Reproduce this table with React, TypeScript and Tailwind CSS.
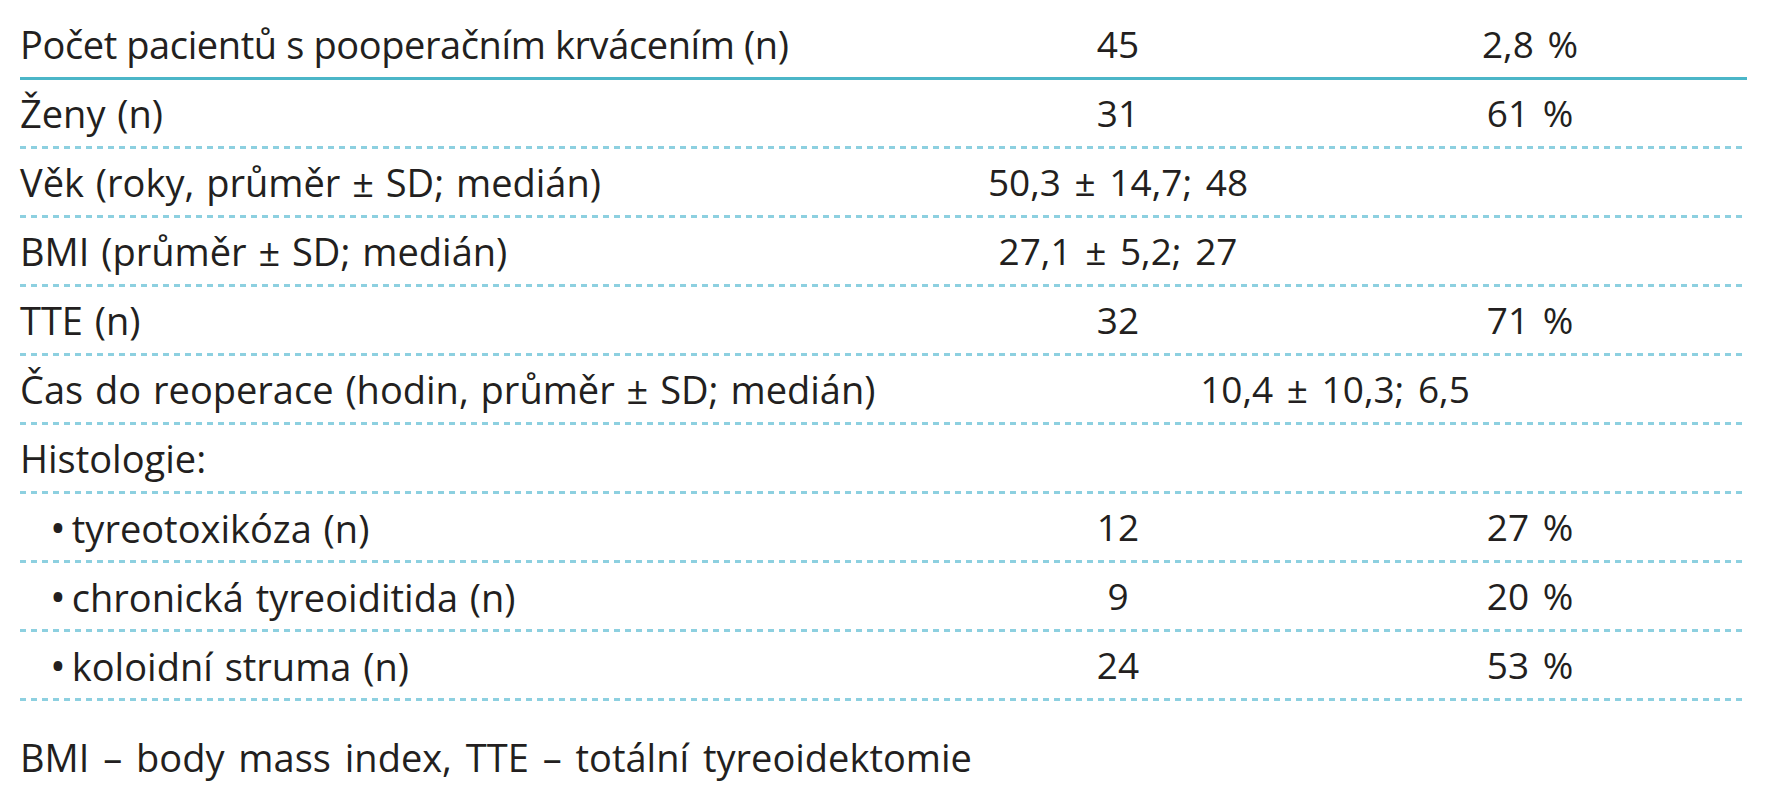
const rows: { label: string; a?: string; b?: string; span?: string; indent?: boolean }[] = [
  { label: "Ženy (n)", a: "31", b: "61 %" },
  { label: "Věk (roky, průměr ± SD; medián)", a: "50,3 ± 14,7; 48" },
  { label: "BMI (průměr ± SD; medián)", a: "27,1 ± 5,2; 27" },
  { label: "TTE (n)", a: "32", b: "71 %" },
  { label: "Čas do reoperace (hodin, průměr ± SD; medián)", span: "10,4 ± 10,3; 6,5" },
  { label: "Histologie:" },
  { label: "tyreotoxikóza (n)", a: "12", b: "27 %", indent: true },
  { label: "chronická tyreoiditida (n)", a: "9", b: "20 %", indent: true },
  { label: "koloidní struma (n)", a: "24", b: "53 %", indent: true },
];

const Dotted = () => (
  <div className="h-[3px] w-full bg-[repeating-linear-gradient(90deg,#8dd0e0_0px,#8dd0e0_6px,transparent_6px,transparent_11px)]" />
);

const App = () => {
  return (
    <div className="w-[1766px] h-[800px] bg-white text-[#231f20] font-['Open_Sans',sans-serif] font-medium text-[38px] overflow-hidden">
      <div className="ml-[20px] w-[1727px] pt-[11px]">
        <div className="grid grid-cols-[903px_390px_434px] h-[66px] leading-[66px]">
          <div className="tracking-[-0.4px]">Počet pacientů s pooperačním krvácením (n)</div>
          <div className="text-center text-[37px]">45</div>
          <div className="text-center text-[37px] [word-spacing:4px]">2,8 %</div>
        </div>
        <div className="h-[3px] w-full bg-[#4bb6c8]" />
        {rows.map((r) => (
          <div key={r.label}>
            <div className="grid grid-cols-[903px_390px_434px] h-[66px] leading-[66px]">
              <div className={r.indent ? "pl-[30px] [word-spacing:2px]" : "[word-spacing:2px]"}>
                {r.indent && <span className="mr-[6px] text-[42px]">•</span>}
                {r.label}
              </div>
              {r.span ? (
                <div className="col-span-2 text-center text-[37px] [word-spacing:4px]">{r.span}</div>
              ) : (
                <>
                  <div className="text-center whitespace-nowrap text-[37px] [word-spacing:4px]">{r.a}</div>
                  <div className="text-center text-[37px] [word-spacing:4px]">{r.b}</div>
                </>
              )}
            </div>
            <Dotted />
          </div>
        ))}
        <div className="mt-[28px] [word-spacing:4px]">BMI – body mass index, TTE – totální tyreoidektomie</div>
      </div>
    </div>
  );
};

export default App;
